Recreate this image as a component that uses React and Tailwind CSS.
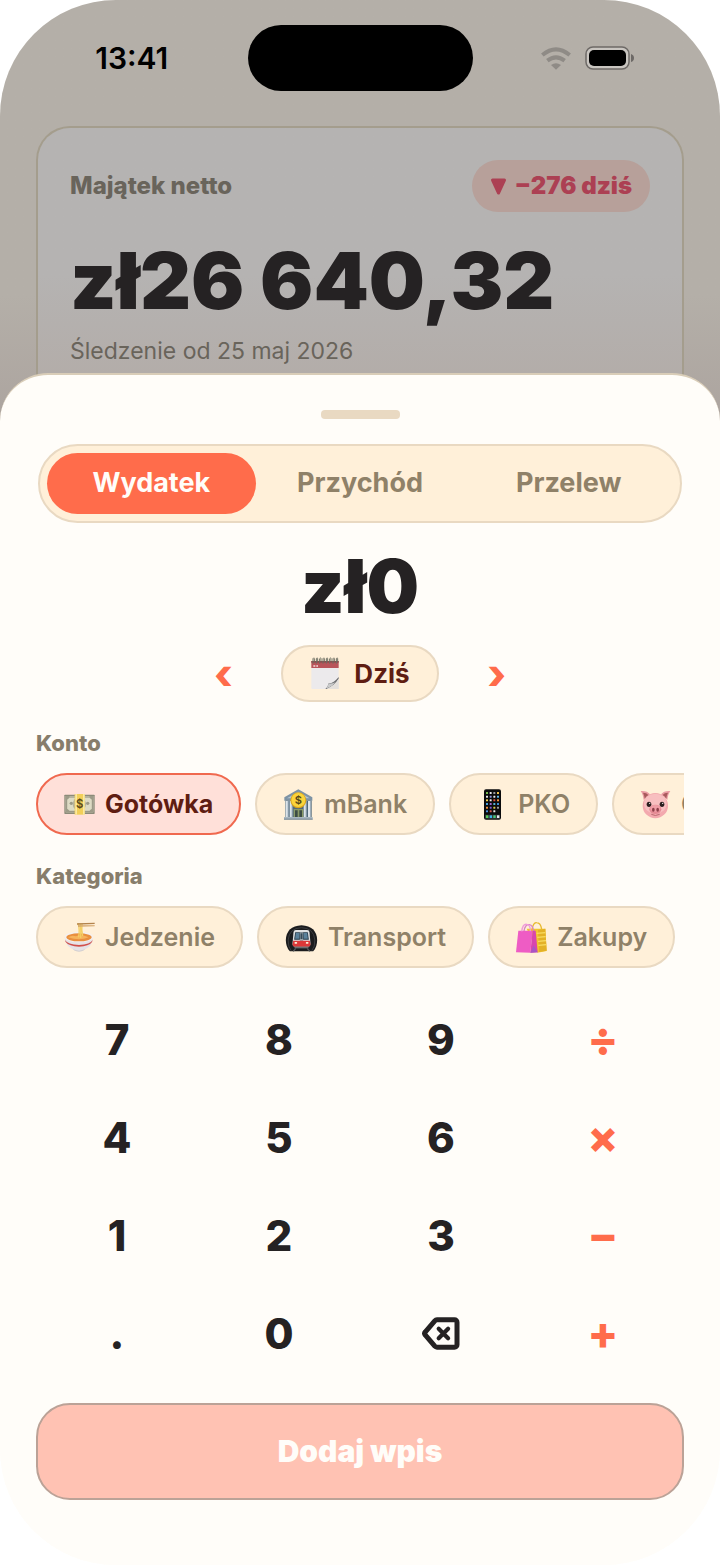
import React, { useState } from "react";
import clsx from "clsx";

/* Ikony emoji */

function CalendarIcon() {
  return (
    <svg width="30" height="33" viewBox="0 0 90 99" aria-hidden="true">
      <rect x="4" y="12" width="82" height="84" rx="3" fill="#eceaec" />
      <path d="M4 12h82v21H4z" fill="#b9545a" />
      <path d="M4 12h82v5H4z" fill="#8f4a4c" />
      <path d="M10 27h6M19 27h5" stroke="#f3dcdc" strokeWidth="4" />
      {[9, 19, 29, 39, 49, 59, 69, 79].map((x) => (
        <path key={x} d={`M${x} 20V5q3-5 4 0v9`} fill="none" stroke="#6d6f63" strokeWidth="3" />
      ))}
      <path d="M46 96q7-4 10-17 14 1 30-19v5q-12 20-36 31z" fill="#6c6d6f" />
      <path d="M50 96q24-11 36-31v31z" fill="#e4e0dc" />
      <path d="M56 79q-2 10-7 15 16-3 26-18-10 5-19 3z" fill="#c9cacb" />
    </svg>
  );
}

function CashIcon() {
  return (
    <svg width="31" height="31" viewBox="0 0 93 93" aria-hidden="true">
      <rect x="1" y="17" width="91" height="58" rx="2" fill="#8c8b79" />
      <rect x="5" y="21" width="83" height="49" fill="#dddbc5" />
      <rect x="8" y="24" width="77" height="43" fill="none" stroke="#8f8e7c" strokeWidth="3" />
      <path d="M5 21h12q-1 11-12 11zM88 21H76q1 11 12 11zM5 70h12q-1-11-12-11zM88 70H76q1-11 12-11z" fill="#9d9b88" />
      <circle cx="22" cy="43" r="5" fill="#9b9986" />
      <circle cx="71" cy="43" r="5" fill="#9b9986" />
      <circle cx="46" cy="45" r="20" fill="#b4b29e" />
      <path d="M32 15h30v62H32z" fill="#f2cf59" />
      <path d="M34 15h5v62h-5zM57 15h5v62h-5z" fill="#fbe9a1" />
      <text x="47" y="57" textAnchor="middle" fontFamily="Inter, sans-serif" fontSize="34" fontWeight="600" fill="#5b4a1c">$</text>
    </svg>
  );
}

function BankIcon() {
  return (
    <svg width="31" height="31" viewBox="0 0 93 93" aria-hidden="true">
      <path d="M46 1 4 25v10h84V25z" fill="#7d93a5" />
      <path d="M46 8 12 28h68z" fill="#b4c4cf" />
      <path d="M7 35h79v50H7z" fill="#51697b" />
      {[8, 20, 62, 75].map((x) => (
        <g key={x}>
          <rect x={x} y="36" width="8" height="48" fill="#dce4ea" />
          <rect x={x + 6} y="36" width="2" height="48" fill="#93a5b3" />
        </g>
      ))}
      <rect x="32" y="60" width="29" height="25" fill="#8a9a68" />
      <path d="M36 64h8v21h-8zM49 64h8v21h-8z" fill="#3c4c45" />
      <path d="M3 84h86v7H3z" fill="#a9b7c0" />
      <path d="M3 89h86v3H3z" fill="#6f8190" />
      <circle cx="46" cy="34" r="24" fill="#d9a51c" />
      <circle cx="46" cy="33" r="21" fill="#fbd43b" />
      <text x="46" y="45" textAnchor="middle" fontFamily="Inter, sans-serif" fontSize="33" fontWeight="600" fill="#54461a">$</text>
    </svg>
  );
}

const APP_COLORS = [
  "#7ac04f", "#e8e8ea", "#9a9aa0", "#f0c34a",
  "#e9e9e9", "#8e8fd6", "#e8e8e8", "#5fb7e8",
  "#f4d24c", "#e9e9ec", "#df4f3c", "#f0953d",
  "#4aa3e0", "#9a65c9", "#55b8d8", "#3e8fd6",
  "#f08f3a", "#7b5bd0", "#d9c84a", "#9a9a9e",
  "#4f90e0", "#d65a4c", "#e8e8e8", "#111111",
];

function PhoneIcon() {
  return (
    <svg width="31" height="31" viewBox="0 0 93 93" aria-hidden="true">
      <rect x="21" y="1" width="51" height="91" rx="6" fill="#0b0b0c" />
      {APP_COLORS.map((color, i) => (
        <rect key={i} x={27 + (i % 4) * 11} y={9 + Math.floor(i / 4) * 11} width="6" height="6" rx="1" fill={color} />
      ))}
      <path d="M24 77h45v10q0 2-2 2H26q-2 0-2-2z" fill="#333a3a" />
      <rect x="27" y="79" width="7" height="8" fill="#57cc5d" />
      <rect x="38" y="79" width="7" height="8" fill="#3bb0e8" />
      <rect x="49" y="79" width="7" height="8" fill="#4acc7a" />
      <rect x="60" y="79" width="7" height="8" fill="#e8e8ef" />
    </svg>
  );
}

function PigIcon() {
  return (
    <svg width="31" height="31" viewBox="0 0 93 93" aria-hidden="true">
      <ellipse cx="46" cy="50" rx="38" ry="38" fill="#f3a9ae" />
      <ellipse cx="46" cy="44" rx="34" ry="30" fill="#f8bfc0" />
      <path d="M2 6q19-2 28 10-13 7-19 17Q9 15 2 6z" fill="#e99ba2" />
      <path d="M9 11q11 0 16 7-6 4-11 11-1-10-5-18z" fill="#a85a5c" />
      <path d="M91 6q-19-2-28 10 13 7 19 17 2-18 9-27z" fill="#e99ba2" />
      <path d="M84 11q-11 0-16 7 6 4 11 11 1-10 5-18z" fill="#a85a5c" />
      <ellipse cx="27" cy="46" rx="7" ry="8" fill="#2d2020" />
      <ellipse cx="66" cy="46" rx="7" ry="8" fill="#2d2020" />
      <circle cx="29" cy="43" r="2" fill="#fff" />
      <circle cx="68" cy="43" r="2" fill="#fff" />
      <path d="M34 76q12 7 25 0" fill="none" stroke="#bb6a70" strokeWidth="3" />
      <ellipse cx="46" cy="61" rx="18" ry="14" fill="#e58a94" />
      <ellipse cx="46" cy="58" rx="15" ry="10" fill="#f09ea6" />
      <ellipse cx="40" cy="62" rx="4" ry="6" fill="#8d3f49" />
      <ellipse cx="53" cy="62" rx="4" ry="6" fill="#8d3f49" />
    </svg>
  );
}

function NoodlesIcon() {
  return (
    <svg width="31" height="31" viewBox="0 0 93 93" aria-hidden="true">
      <path d="M25 76h40q-2 13-20 13T25 76z" fill="#d3cfd1" />
      <path d="M2 45q2 36 43 41 41-5 42-41z" fill="#e6e3e6" />
      <path d="M3 54q8 14 42 15 34-1 41-15l-2 6q-9 13-39 14Q15 73 5 60z" fill="#d1504b" />
      <ellipse cx="45" cy="45" rx="43" ry="16" fill="#f4f0ef" />
      <ellipse cx="45" cy="46" rx="38" ry="12" fill="#e98f3e" />
      <path d="M12 46q12-8 24-3 15-7 38 3-27 12-62 0z" fill="#f6b35c" />
      <path d="M42 4q6 18 2 42M48 4q4 20 2 44M54 4q-2 19 2 38" fill="none" stroke="#f4cf62" strokeWidth="4" />
      <path d="M39 4 92 2v4l-53 2z" fill="#b3834c" />
      <path d="M42 10l50 0v3l-50 1z" fill="#d3a469" />
    </svg>
  );
}

function MetroIcon() {
  return (
    <svg width="33" height="31" viewBox="0 0 98 93" aria-hidden="true">
      <path d="M14 88Q2 76 2 54 4 12 49 10q45 2 47 44 0 22-12 34z" fill="#1b1c1e" />
      <path d="M18 86Q8 74 9 54 12 18 49 17q37 1 40 37 1 20-9 32" fill="none" stroke="#3b3d40" strokeWidth="3" />
      <path d="M32 24h34q6 0 7 6l3 35q0 9-9 9H31q-9 0-9-9l3-35q1-6 7-6z" fill="#dfe1e2" />
      <path d="M30 31h38l3 22H27z" fill="#263b4b" />
      <path d="M32 33h11l-1 17H30zM55 33h11l2 17H56z" fill="#5a819b" />
      <rect x="44" y="31" width="10" height="26" fill="#9aa5ac" />
      <rect x="46" y="34" width="6" height="17" fill="#354b59" />
      <path d="M24 56h50l2 12q-1 6-8 6H30q-7 0-8-6z" fill="#dc3838" />
      <rect x="28" y="60" width="8" height="5" rx="2" fill="#fff2d9" />
      <rect x="62" y="60" width="8" height="5" rx="2" fill="#fff2d9" />
      <path d="M28 74h42v5H28z" fill="#6b6e70" />
      <path d="m32 79-8 9M66 79l8 9" stroke="#55585b" strokeWidth="4" />
    </svg>
  );
}

function BagsIcon() {
  return (
    <svg width="31" height="31" viewBox="0 0 93 93" aria-hidden="true">
      <path d="M48 22Q52 1 62 2q12 0 15 20" fill="none" stroke="#e8b92d" strokeWidth="4" />
      <path d="M32 20h56l4 67-28 5z" fill="#f2c52e" />
      <path d="M88 20 66 24l3 66 23-4z" fill="#e3b127" />
      <path d="M62 34l26-2M64 46l25-2M66 58l24-2M67 70l24-2" stroke="#f8dc61" strokeWidth="4" />
      <path d="M24 28Q27 6 40 8q11 2 13 20" fill="none" stroke="#d986c4" strokeWidth="4" />
      <path d="M7 26h43l-7 66-43-1z" fill="#ee5cc4" />
      <path d="m50 26 9 0 6 65-22 1z" fill="#d846ae" />
      <path d="m53 70 12 21-22 1z" fill="#a955c4" />
      <path d="M17 28Q20 5 32 7q12 2 11 21" fill="none" stroke="#f09bdb" strokeWidth="4" />
    </svg>
  );
}

function BackspaceIcon() {
  return (
    <svg width="38" height="33" viewBox="0 0 38 33" fill="none" stroke="currentColor" strokeWidth="5" strokeLinecap="round" strokeLinejoin="round" aria-hidden="true">
      <path d="M15 2.800h17.500a2.500 2.500 0 0 1 2.500 2.500v22.400a2.500 2.500 0 0 1-2.500 2.500H15a3 3 0 0 1-2.200-1L3.400 18.200a2.500 2.500 0 0 1 0-3.400L12.800 3.800a3 3 0 0 1 2.200-1z" />
      <path d="m16.700 11.800 9.400 9.400M26.100 11.800l-9.400 9.400" strokeWidth="4.200" />
    </svg>
  );
}

function WifiIcon() {
  return (
    <svg width="30" height="23" viewBox="0 0 90 69" fill="none" stroke="#8f8b86" strokeWidth="12" aria-hidden="true">
      <path d="M4 24q41-34 82 0" />
      <path d="M19 41q26-20 52 0" />
      <path d="M45 68 30 54q15-11 30 0z" fill="#8f8b86" stroke="none" />
    </svg>
  );
}

function BatteryIcon() {
  return (
    <svg width="50" height="24" viewBox="0 0 50 24" aria-hidden="true">
      <rect x="1" y="1" width="43" height="22" rx="7" fill="#c9c5c0" stroke="#6d6966" strokeWidth="1.500" />
      <rect x="4" y="4" width="37" height="16" rx="5" fill="#000" />
      <path d="M46 8q3 1 3 4t-3 4z" fill="#6d6966" />
    </svg>
  );
}

const TYPES = ["Wydatek", "Przychód", "Przelew"];

const ACCOUNTS = [
  { name: "Gotówka", icon: <CashIcon /> },
  { name: "mBank", icon: <BankIcon /> },
  { name: "PKO", icon: <PhoneIcon /> },
  { name: "Oszczędności", icon: <PigIcon /> },
];

const CATEGORIES = [
  { name: "Jedzenie", icon: <NoodlesIcon /> },
  { name: "Transport", icon: <MetroIcon /> },
  { name: "Zakupy", icon: <BagsIcon /> },
];

const KEYS = ["7", "8", "9", "÷", "4", "5", "6", "×", "1", "2", "3", "−", ".", "0", "del", "+"];
const OPERATORS = ["÷", "×", "−", "+"];

function Chips({ label, items, selected, onSelect }) {
  return (
    <section className="mt-[27px] px-9">
      <h3 className="text-[22px] leading-7 font-extrabold text-[#877d6b]">{label}</h3>
      <div className="mt-4 flex gap-[14px] overflow-hidden">
        {items.map((item) => (
          <button
            key={item.name}
            type="button"
            onClick={() => onSelect(item.name)}
            className={clsx(
              "flex h-[62px] shrink-0 items-center gap-[10px] rounded-full border-2 px-[26px] text-[25px] leading-8",
              selected === item.name
                ? "border-[#f0694f] bg-[#ffe0d9] font-bold text-[#5f1d12]"
                : "border-[#e9d9c2] bg-[#fff0d9] font-semibold text-[#8f8168]"
            )}
          >
            {item.icon}
            <span>{item.name}</span>
          </button>
        ))}
      </div>
    </section>
  );
}

function App() {
  const [type, setType] = useState("Wydatek");
  const [account, setAccount] = useState("Gotówka");
  const [category, setCategory] = useState("");
  const [amount, setAmount] = useState("0");

  const handleKey = (key) => {
    if (key === "del") {
      setAmount(amount.length > 1 ? amount.slice(0, -1) : "0");
      return;
    }
    if (amount === "0" && key >= "0" && key <= "9") {
      setAmount(key);
      return;
    }
    setAmount(amount + key);
  };

  return (
    <div className="min-h-screen bg-white font-['Inter',sans-serif]">
      <div className="flex min-h-screen flex-col overflow-hidden rounded-[116px] bg-[#fffdf9]">
        {/* Ekran pod spodem */}
        <div className="bg-linear-to-b from-[#b4afa8] from-70% to-[#aca49f]">
          <header className="grid h-[126px] grid-cols-[1fr_225px_1fr] items-start pt-[25px]">
            <div className="flex h-[66px] items-center justify-center pl-4 text-[30px] font-semibold text-black">13:41</div>
            <div className="h-[66px] rounded-full bg-black" />
            <div className="flex h-[66px] items-center justify-center gap-[14px] pr-4">
              <WifiIcon />
              <BatteryIcon />
            </div>
          </header>
          <section className="mx-9 h-[295px] rounded-t-[34px] border-2 border-b-0 border-[#a49d8d] bg-linear-to-b from-[#b5b3b2] from-50% to-[#b2aaa5] px-8 pt-8">
            <div className="flex items-center justify-between">
              <h2 className="text-[24px] font-extrabold text-[#69645b]">Majątek netto</h2>
              <div className="flex h-[52px] items-center gap-[7px] rounded-full bg-[#b7a09a] px-[18px] text-[24px] font-black text-[#ac4053]">
                <svg width="17" height="17" viewBox="0 0 17 17" aria-hidden="true">
                  <path d="M2.500 2h12L8.500 15z" fill="currentColor" stroke="currentColor" strokeWidth="3" strokeLinejoin="round" />
                </svg>
                <span>−276 dziś</span>
              </div>
            </div>
            <p className="mt-[23px] text-[79px] leading-[90px] font-black whitespace-nowrap text-[#252223]">zł26 640,32</p>
            <p className="mt-[10px] text-[23px] leading-8 text-[#69645b]">Śledzenie od 25 maj 2026</p>
          </section>
        </div>

        {/* Nowy wpis */}
        <main className="-mt-12 flex-1 rounded-t-[48px] border-t-2 border-[#d9cdb8] bg-[#fffdf9] pt-[35px] pb-16">
          <div className="mx-auto h-[9px] w-[79px] rounded-[4px] bg-[#e9d9c2]" />
          <div className="mx-[38px] mt-[25px] grid grid-cols-3 rounded-full border-2 border-[#e9d9c2] bg-[#fff0d9] p-[7px]">
            {TYPES.map((item) => (
              <button
                key={item}
                type="button"
                onClick={() => setType(item)}
                className={clsx(
                  "h-[61px] rounded-full text-[27px] font-bold",
                  type === item ? "bg-[#ff6c4b] text-[#fffdf9]" : "text-[#8f8168]"
                )}
              >
                {item}
              </button>
            ))}
          </div>

          <output className="mt-[27px] block text-center text-[74px] leading-[72px] font-black text-[#252223]">zł{amount}</output>

          <div className="mt-[23px] flex items-center justify-center gap-[30px] text-[#ff6c4b]">
            <button type="button" aria-label="Poprzedni dzień" className="flex h-[57px] w-14 items-center justify-center text-[42px] leading-[57px] font-extrabold">‹</button>
            <button type="button" className="flex h-[57px] items-center gap-[14px] rounded-full border-2 border-[#e9d9c2] bg-[#fff0d9] px-[27px] text-[26px] font-bold text-[#5f1d12]">
              <CalendarIcon />
              <span>Dziś</span>
            </button>
            <button type="button" aria-label="Następny dzień" className="flex h-[57px] w-14 items-center justify-center text-[42px] leading-[57px] font-extrabold">›</button>
          </div>

          <Chips label="Konto" items={ACCOUNTS} selected={account} onSelect={setAccount} />
          <Chips label="Kategoria" items={CATEGORIES} selected={category} onSelect={setCategory} />

          <div className="mx-9 mt-[22px] grid grid-cols-4">
            {KEYS.map((key) => (
              <button
                key={key}
                type="button"
                aria-label={key === "del" ? "Usuń" : undefined}
                onClick={() => handleKey(key)}
                className={clsx(
                  "flex h-[98px] items-center justify-center font-extrabold",
                  OPERATORS.includes(key) ? "text-[45px] text-[#ff6c4b]" : "text-[42px] text-[#252223]"
                )}
              >
                {key === "del" ? <BackspaceIcon /> : key}
              </button>
            ))}
          </div>

          <div className="px-9 pt-[21px]">
            <button type="button" className="h-[97px] w-full rounded-[34px] border-2 border-[#bba297] bg-[#ffc2b3] text-[30px] font-black text-[#fffdf9]">
              Dodaj wpis
            </button>
          </div>
        </main>
      </div>
    </div>
  );
}

export default App;
